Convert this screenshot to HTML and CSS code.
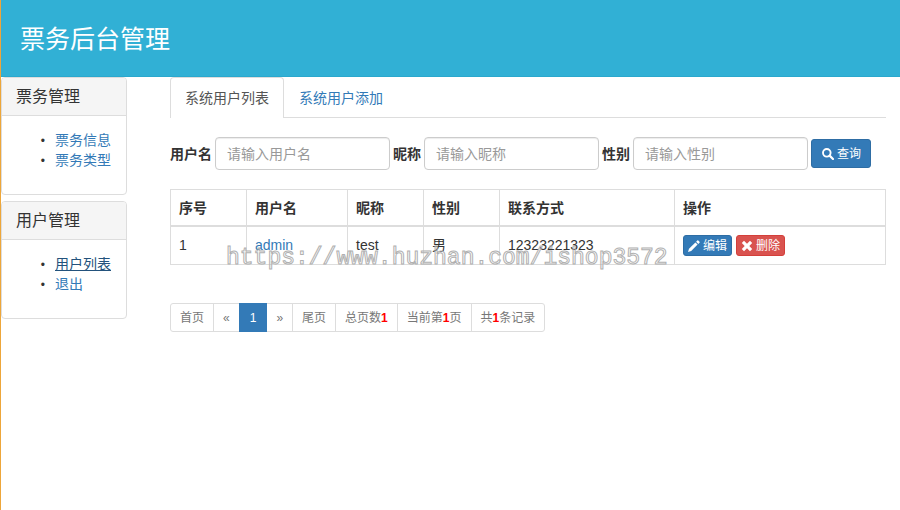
FILE: index.html
```html
<!DOCTYPE html>
<html lang="zh-CN">
<head>
<meta charset="utf-8">
<title>票务后台管理</title>
<link rel="stylesheet" href="styles.css">
</head>
<body>
<header class="banner"><h1>票务后台管理</h1></header>
<div class="layout">
  <nav class="sidebar">
    <section class="panel">
      <h2>票务管理</h2>
      <ul>
        <li><a href="#">票务信息</a></li>
        <li><a href="#">票务类型</a></li>
      </ul>
    </section>
    <section class="panel">
      <h2>用户管理</h2>
      <ul>
        <li><a href="#" class="current">用户列表</a></li>
        <li><a href="#">退出</a></li>
      </ul>
    </section>
  </nav>
  <main class="content">
    <div class="tabs">
      <a href="#" class="tab active">系统用户列表</a>
      <a href="#" class="tab">系统用户添加</a>
    </div>
    <form class="search">
      <label for="username">用户名</label>
      <input id="username" type="text" placeholder="请输入用户名">
      <label for="nickname">昵称</label>
      <input id="nickname" type="text" placeholder="请输入昵称">
      <label for="gender">性别</label>
      <input id="gender" type="text" placeholder="请输入性别">
      <button type="button" class="btn query">
        <svg class="icon" viewBox="0 0 12 12" aria-hidden="true"><circle cx="4.8" cy="4.8" r="3.8" fill="none" stroke="currentColor" stroke-width="1.9"/><path d="M7.6 7.6 11 11" stroke="currentColor" stroke-width="2.2" stroke-linecap="round"/></svg>
        查询
      </button>
    </form>
    <div class="table-area">
      <table class="users">
        <colgroup>
          <col class="col-s"><col class="col-m"><col class="col-s"><col class="col-s"><col class="col-l"><col>
        </colgroup>
        <thead>
          <tr><th>序号</th><th>用户名</th><th>昵称</th><th>性别</th><th>联系方式</th><th>操作</th></tr>
        </thead>
        <tbody>
          <tr>
            <td>1</td><td><a href="#">admin</a></td><td>test</td><td>男</td><td>12323221323</td>
            <td>
              <div class="actions">
                <button type="button" class="btn small">
                  <svg class="icon" viewBox="0 0 12 12" aria-hidden="true"><path fill="currentColor" d="M0 12 1 8.8 7.4 2.4 9.6 4.6 3.2 11ZM8.1 1.7 9.3.5Q9.8 0 10.3.5L11.5 1.7Q12 2.2 11.5 2.7L10.3 3.9Z"/></svg>
                  编辑
                </button>
                <button type="button" class="btn small danger">
                  <svg class="icon" viewBox="0 0 12 12" aria-hidden="true"><path fill="currentColor" d="M3 .8 6 3.7 9 .8 11.2 3 8.3 6 11.2 9 9 11.2 6 8.3 3 11.2.8 9 3.7 6 .8 3Z"/></svg>
                  删除
                </button>
              </div>
            </td>
          </tr>
        </tbody>
      </table>
      <div class="watermark">https://www.huzhan.com/ishop3572</div>
    </div>
    <nav class="pager">
      <a href="#">首页</a>
      <a href="#">«</a>
      <a href="#" class="active">1</a>
      <a href="#">»</a>
      <a href="#">尾页</a>
      <a href="#">总页数<b>1</b></a>
      <a href="#">当前第<b>1</b>页</a>
      <a href="#">共<b>1</b>条记录</a>
    </nav>
  </main>
</div>
</body>
</html>
```
FILE: styles.css
```css
* { box-sizing: border-box; }

body {
  margin: 0;
  min-height: 100vh;
  border-left: 1px solid #eda63a;
  background: #fff;
  color: #333;
  font: 14px/20px "Liberation Sans", "Noto Sans CJK SC", sans-serif;
}

a { color: #337ab7; text-decoration: none; }

.banner {
  padding: 21px 19px 19px;
  background: #31b0d5;
  border-bottom: 1px solid #2aa8cd;
  color: #fff;
}
.banner h1 { margin: 0; font-size: 25px; line-height: 36px; font-weight: 400; }

.layout { display: flex; gap: 43px; padding-right: 14px; }

.sidebar { flex: 0 0 126px; }
.panel {
  margin-bottom: 6px;
  border: 1px solid #ddd;
  border-radius: 4px;
  overflow: hidden;
}
.panel h2 {
  margin: 0;
  padding: 9px 14px 8px;
  background: #f5f5f5;
  border-bottom: 1px solid #ddd;
  font-size: 16px;
  line-height: 20px;
  font-weight: 400;
}
.panel ul {
  margin: 0;
  padding: 14px 0 24px 53px;
  list-style-type: "•   ";
}
.panel li::marker { font-size: 12px; }
.panel .current { color: #23527c; text-decoration: underline; }

.content { flex: 1; min-width: 0; }

.tabs { display: flex; border-bottom: 1px solid #ddd; }
.tab {
  padding: 10px 14px 9px;
  border: 1px solid transparent;
  border-bottom: 0;
  border-radius: 4px 4px 0 0;
}
.tab.active {
  margin-bottom: -1px;
  padding-bottom: 10px;
  border-color: #ddd;
  background: #fff;
  color: #555;
}

.search { display: flex; align-items: center; gap: 3px; margin: 19px 0; }
.search label { flex: none; font-weight: 700; }
.search input {
  flex: 0 1 175px;
  min-width: 0;
  height: 33px;
  padding: 1px 11px 0;
  border: 1px solid #ccc;
  border-radius: 4px;
  box-shadow: inset 0 1px 1px rgba(0, 0, 0, .075);
  font: inherit;
}
.search input::placeholder { color: #999; opacity: 1; }

.btn {
  display: inline-flex;
  align-items: center;
  justify-content: center;
  gap: 3px;
  flex: none;
  border: 1px solid #2e6da4;
  border-radius: 3px;
  background: #337ab7;
  color: #fff;
  font: 12px/17px "Liberation Sans", "Noto Sans CJK SC", sans-serif;
}
.btn .icon { width: 12px; height: 12px; margin-bottom: 2px; }
.query { padding: 6px 9px 4px 10px; }
.small { padding: 2px 4px 0; }
.danger { background: #d9534f; border-color: #d43f3a; }

.table-area { position: relative; }
.users {
  width: 100%;
  table-layout: fixed;
  border-collapse: collapse;
}
.users th, .users td {
  padding: 8px 7px 8px 8px;
  border: 1px solid #ddd;
  text-align: left;
}
.users th { padding-bottom: 7px; border-bottom-width: 2px; }
.users td { line-height: 21px; vertical-align: top; }
.col-s { width: 76px; }
.col-m { width: 101px; }
.col-l { width: 175px; }
.actions { display: flex; gap: 4px; }

.watermark {
  position: absolute;
  left: 56px;
  bottom: -9px;
  color: transparent;
  -webkit-text-stroke: 1px #b0b0b0;
  font: 23px/32px "Liberation Mono", monospace;
  pointer-events: none;
}

.pager { display: flex; margin-top: 38px; font-size: 12px; line-height: 17px; }
.pager a {
  padding: 6px 9px 4px;
  margin-left: -1px;
  border: 1px solid #ddd;
  color: #777;
}
.pager a:first-child { margin-left: 0; border-radius: 3px 0 0 3px; }
.pager a:last-child { border-radius: 0 3px 3px 0; }
.pager .active {
  z-index: 1;
  padding: 6px 10px 4px;
  background: #337ab7;
  border-color: #337ab7;
  color: #fff;
}
.pager b { color: #f00; }
```
